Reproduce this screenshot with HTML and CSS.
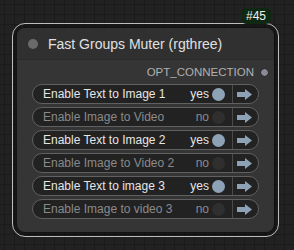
FILE: index.html
```html
<!DOCTYPE html>
<html lang="en">
<head>
    <meta charset="UTF-8">
    <title>Fast Groups Muter</title>
    <link rel="stylesheet" href="styles.css">
</head>
<body>
    <div class="canvas">
        <div class="node">
            <div class="node-id">#45</div>
            <div class="title-bar">
                <span class="title-dot"></span>
                <span class="title">Fast Groups Muter (rgthree)</span>
            </div>
            <div class="output-row">
                <span class="output-name">OPT_CONNECTION</span>
                <span class="output-dot"></span>
            </div>
            <div class="widgets">
                <div class="toggle on">
                    <span class="label">Enable Text to Image 1</span>
                    <span class="state">yes</span>
                    <span class="knob"></span>
                    <span class="nav"><svg width="15" height="11" viewBox="0 0 15 11"><path d="M0 3H8V0L15 5.5L8 11V8H0Z"/></svg></span>
                </div>
                <div class="toggle">
                    <span class="label">Enable Image to Video</span>
                    <span class="state">no</span>
                    <span class="knob"></span>
                    <span class="nav"><svg width="15" height="11" viewBox="0 0 15 11"><path d="M0 3H8V0L15 5.5L8 11V8H0Z"/></svg></span>
                </div>
                <div class="toggle on">
                    <span class="label">Enable Text to Image 2</span>
                    <span class="state">yes</span>
                    <span class="knob"></span>
                    <span class="nav"><svg width="15" height="11" viewBox="0 0 15 11"><path d="M0 3H8V0L15 5.5L8 11V8H0Z"/></svg></span>
                </div>
                <div class="toggle">
                    <span class="label">Enable Image to Video 2</span>
                    <span class="state">no</span>
                    <span class="knob"></span>
                    <span class="nav"><svg width="15" height="11" viewBox="0 0 15 11"><path d="M0 3H8V0L15 5.5L8 11V8H0Z"/></svg></span>
                </div>
                <div class="toggle on">
                    <span class="label">Enable Text to image 3</span>
                    <span class="state">yes</span>
                    <span class="knob"></span>
                    <span class="nav"><svg width="15" height="11" viewBox="0 0 15 11"><path d="M0 3H8V0L15 5.5L8 11V8H0Z"/></svg></span>
                </div>
                <div class="toggle">
                    <span class="label">Enable Image to video 3</span>
                    <span class="state">no</span>
                    <span class="knob"></span>
                    <span class="nav"><svg width="15" height="11" viewBox="0 0 15 11"><path d="M0 3H8V0L15 5.5L8 11V8H0Z"/></svg></span>
                </div>
            </div>
        </div>
    </div>
</body>
</html>
```

FILE: styles.css
```css
* {
    margin: 0;
    padding: 0;
    box-sizing: border-box;
}

body {
    width: 294px;
    height: 250px;
    overflow: hidden;
    font-family: 'Liberation Sans', Arial, sans-serif;
    background-color: #222;
    background-image:
        linear-gradient(to right, #1b1b1b 1px, transparent 1px),
        linear-gradient(to bottom, #1b1b1b 1px, transparent 1px);
    background-size: 10px 10px;
    background-position: 4px 4px;
}

.canvas {
    padding: 28px 0 0 17px;
}

.node {
    position: relative;
    width: 257px;
    height: 204px;
    background: #353535;
    border-radius: 8px;
    box-shadow: 0 0 4px 3px rgba(0, 0, 0, 0.45);
}

/* selection ring */
.node::before {
    content: "";
    position: absolute;
    inset: -5px;
    border: 1px solid #bdbdbd;
    border-radius: 13px;
}

.node-id {
    position: absolute;
    left: 224px;
    top: -20px;
    width: 30px;
    height: 16px;
    background: #0f2812;
    border-radius: 5px;
    color: #eee;
    font-size: 12px;
    line-height: 16px;
    text-align: center;
    z-index: 1;
}

.title-bar {
    height: 32px;
    display: flex;
    align-items: center;
    background: #303030;
    border-radius: 8px 8px 0 0;
    border-bottom: 1px solid #2b2b2b;
    padding-left: 11px;
}

.title-dot {
    width: 10px;
    height: 10px;
    border-radius: 50%;
    background: #6a6a6a;
    margin-right: 10px;
}

.title {
    color: #e0e0e0;
    font-size: 14px;
}

.output-row {
    height: 24px;
    display: flex;
    align-items: center;
    justify-content: flex-end;
    padding-right: 5px;
    gap: 6px;
}

.output-name {
    color: #b0b0b0;
    font-size: 11.5px;
}

.output-dot {
    width: 9px;
    height: 9px;
    border-radius: 50%;
    background: #8a8a96;
    border: 1px solid #1e1e1e;
}

.widgets {
    display: flex;
    flex-direction: column;
    gap: 3px;
    padding: 0 15px;
}

.toggle {
    height: 20px;
    display: flex;
    align-items: center;
    background: #222;
    border: 1px solid #606060;
    border-radius: 10px;
    padding-left: 10px;
    font-size: 12px;
    color: #8a8a8a;
}

.toggle.on {
    color: #e6e6e6;
}

.label {
    flex: 1;
    white-space: nowrap;
}

.state {
    margin-right: 3px;
}

.knob {
    width: 13px;
    height: 13px;
    border-radius: 50%;
    background: #2f2f2f;
    margin-right: 7px;
}

.toggle.on .knob {
    background: #8ea2b6;
}

.nav {
    width: 26px;
    height: 100%;
    border-left: 1px solid #4a4a4a;
    display: flex;
    align-items: center;
    justify-content: center;
    padding-right: 2px;
}

.nav svg {
    fill: #8ea2b6;
}
```
